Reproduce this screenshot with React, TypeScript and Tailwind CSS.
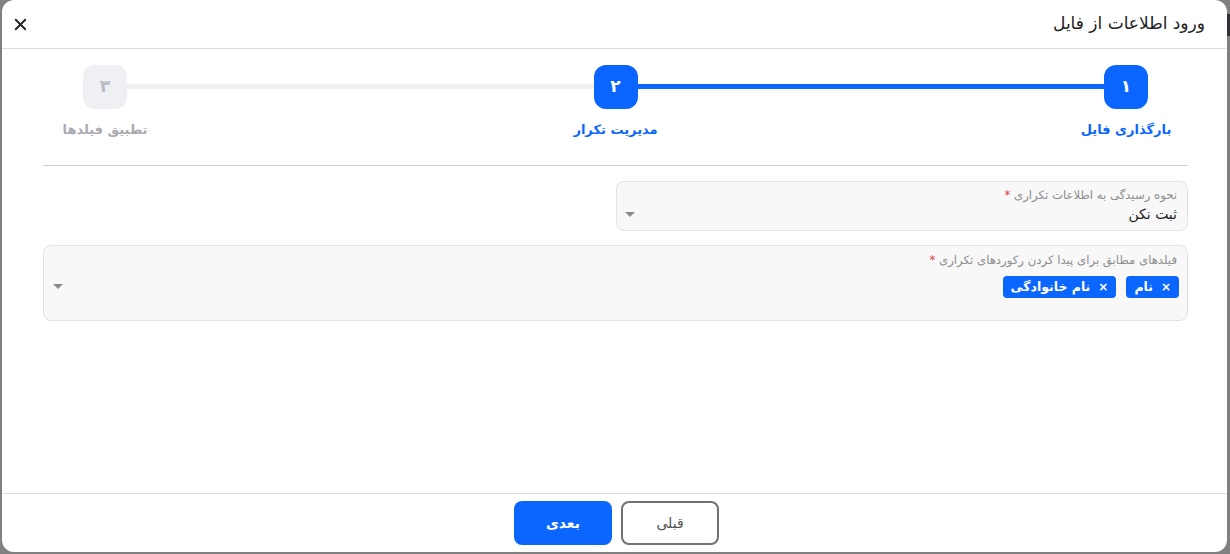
import { X } from "lucide-react";

const BLUE = "bg-[#0a66ff]";

function Caret() {
  return (
    <svg width="10" height="6" viewBox="0 0 10 6" className="shrink-0">
      <path d="M0 0 L10 0 L5 5 Z" fill="#8a8a8a" />
    </svg>
  );
}

function Step({ num, label, state }: { num: string; label: string; state: "done" | "active" | "idle" }) {
  const on = state !== "idle";
  return (
    <div className="relative z-10 flex w-[100px] shrink-0 flex-col items-center">
      <div
        className={
          on
            ? "flex h-[44px] w-[44px] items-center justify-center rounded-[12px] bg-[#0a66ff] text-[17px] font-bold text-white"
            : "flex h-[44px] w-[44px] items-center justify-center rounded-[12px] bg-[#eef0f3] text-[17px] font-bold text-[#b7bcc6]"
        }
      >
        {num}
      </div>
      <div
        className={
          on
            ? "mt-[11px] whitespace-nowrap text-[13px] font-bold text-[#0a66ff]"
            : "mt-[11px] whitespace-nowrap text-[13px] font-bold text-[#a9abb0]"
        }
      >
        {label}
      </div>
    </div>
  );
}

function Chip({ text }: { text: string }) {
  return (
    <span className={`${BLUE} flex h-[22px] items-center gap-[8px] rounded-[4px] pl-[8px] pr-[8px] text-[12.5px] font-bold text-white`}>
      <span className="text-[12px] leading-none">×</span>
      <span>{text}</span>
    </span>
  );
}

export default function App() {
  return (
    <div
      className="relative h-[554px] w-[1230px] overflow-hidden bg-[#808080]"
      style={{ fontFamily: '"DejaVu Sans", sans-serif' }}
    >
      <div className="absolute right-0 top-[14px] h-[22px] w-[6px] rounded-l-[3px] bg-[#2f3134]" />
      <div dir="rtl" className="relative ml-[2px] flex h-[552px] w-[1225px] flex-col rounded-[12px] bg-white">
        {/* header */}
        <div className="flex h-[49px] shrink-0 items-center justify-between border-b border-[#dedede] pl-[9px] pr-[22px]">
          <h2 className="text-[17px] text-[#222]">ورود اطلاعات از فایل</h2>
          <button className="text-[#222]">
            <X size={19} strokeWidth={2.4} />
          </button>
        </div>

        {/* body */}
        <div className="flex-1 pl-[41px] pr-[39px]">
          <div className="flex items-start px-[12px] pt-[16px]">
            <Step num="۱" label="بارگذاری فایل" state="done" />
            <div className="-mx-[28px] mt-[19px] h-[5px] flex-1 bg-[#0a66ff]" />
            <Step num="۲" label="مدیریت تکرار" state="active" />
            <div className="-mx-[28px] mt-[19px] h-[5px] flex-1 bg-[#eff0f2]" />
            <Step num="۳" label="تطبیق فیلدها" state="idle" />
          </div>

          <div className="mt-[25px] border-t border-[#cfcfcf]" />

          <div className="mt-[15px] grid grid-cols-2">
            <div className="flex h-[50px] flex-col rounded-[8px] border border-[#e3e3e3] bg-[#f8f8f8] pl-[8px] pr-[10px] pt-[5px]">
              <div className="text-[11.7px] text-[#8d8d8d]">
                نحوه رسیدگی به اطلاعات تکراری <span className="text-[#e0434b]">*</span>
              </div>
              <div className="flex items-center justify-between">
                <span className="text-[14px] text-[#222]">ثبت نکن</span>
                <Caret />
              </div>
            </div>
          </div>

          <div className="mt-[14px] flex h-[76px] flex-col rounded-[8px] border border-[#e3e3e3] bg-[#f8f8f8] pl-[9px] pr-[8px] pt-[6px]">
            <div className="pr-[2px] text-[11.7px] text-[#8d8d8d]">
              فیلدهای مطابق برای پیدا کردن رکوردهای تکراری <span className="text-[#e0434b]">*</span>
            </div>
            <div className="mt-[7px] flex items-center justify-between">
              <div className="flex gap-[10px]">
                <Chip text="نام" />
                <Chip text="نام خانوادگی" />
              </div>
              <Caret />
            </div>
          </div>
        </div>

        {/* footer */}
        <div className="flex h-[59px] shrink-0 items-start justify-center gap-[9px] border-t border-[#dedede] pl-[4px] pt-[7px]">
          <button className="h-[44px] w-[98px] rounded-[8px] border-2 border-[#6b7472] bg-white text-[14px] text-[#555]">
            قبلی
          </button>
          <button className={`${BLUE} h-[44px] w-[98px] rounded-[8px] text-[14px] font-bold text-white`}>
            بعدی
          </button>
        </div>
      </div>
    </div>
  );
}
